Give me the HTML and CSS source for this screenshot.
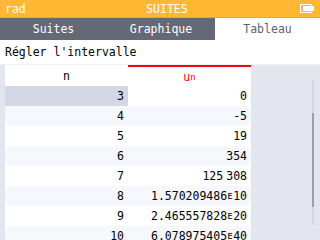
FILE: index.html
```html
<!DOCTYPE html>
<html>
<head>
  <meta charset="UTF-8">
  <title>Suites</title>
  <link rel="stylesheet" href="styles.css">
</head>
<body>
  <div class="screen">
    <div class="titlebar">
      <span class="angle">rad</span>
      <span class="title">SUITES</span>
      <svg class="battery" width="14" height="9" viewBox="0 0 14 9">
        <rect x="0.5" y="0.5" width="11" height="8" fill="none" stroke="#fff"/>
        <rect x="3" y="2" width="8" height="5" fill="#fff"/>
        <rect x="12" y="2" width="2" height="5" fill="#fff"/>
      </svg>
    </div>

    <div class="tabs">
      <div class="tab">Suites</div>
      <div class="tab">Graphique</div>
      <div class="tab active">Tableau</div>
    </div>

    <div class="range">Régler l'intervalle</div>

    <div class="table-wrap">
      <div class="table">
        <div class="cell head">n</div>
        <div class="cell head seq">u<sub>n</sub></div>

        <div class="cell num selected">3</div>
        <div class="cell">0</div>

        <div class="cell num alt">4</div>
        <div class="cell alt">-5</div>

        <div class="cell num">5</div>
        <div class="cell">19</div>

        <div class="cell num alt">6</div>
        <div class="cell alt">354</div>

        <div class="cell num">7</div>
        <div class="cell">125<span class="thin"></span>308</div>

        <div class="cell num alt">8</div>
        <div class="cell alt">1.570209486<span class="e">ᴇ</span>10</div>

        <div class="cell num">9</div>
        <div class="cell">2.465557828<span class="e">ᴇ</span>20</div>

        <div class="cell num alt">10</div>
        <div class="cell alt">6.078975405<span class="e">ᴇ</span>40</div>
      </div>

      <div class="side">
        <div class="track"><div class="thumb"></div></div>
      </div>
    </div>
  </div>
</body>
</html>
```

FILE: styles.css
```css
html, body {
  margin: 0;
  padding: 0;
}

body {
  width: 320px;
  height: 240px;
  overflow: hidden;
  background: #fff;
  font-family: "DejaVu Sans Mono", "Liberation Mono", monospace;
  font-size: 11.5px;
  color: #000;
}

.screen {
  display: flex;
  flex-direction: column;
  height: 240px;
}

.titlebar {
  height: 17px;
  border-bottom: 1px solid #e9a62c;
  background: #ffb734;
  color: #fff;
  display: flex;
  align-items: center;
  justify-content: space-between;
  padding: 0 6px 0 5px;
}

.title {
  margin-left: 8px;
}

.battery {
  display: block;
}

.tabs {
  height: 22px;
  background: #656975;
  display: grid;
  grid-template-columns: 107px 108px 105px;
}

.tab {
  color: #fff;
  display: flex;
  align-items: center;
  justify-content: center;
}

.tab.active {
  background: #fff;
  color: #5d6270;
}

.range {
  height: 24px;
  border-bottom: 1px solid #eef0f4;
  padding-left: 5px;
  display: flex;
  align-items: center;
}

.table-wrap {
  flex: 1;
  display: flex;
  background: #e4e6ef;
  padding-left: 5px;
  overflow: hidden;
}

.table {
  display: grid;
  grid-template-columns: 123px 123px;
  grid-template-rows: 21px;
  grid-auto-rows: 20px;
  background: #fff;
  align-self: flex-start;
}

.cell {
  display: flex;
  align-items: center;
  justify-content: flex-end;
  padding-right: 4px;
  background: #fff;
}

.cell.head {
  justify-content: center;
  padding-right: 0;
}

.cell.seq {
  color: #ff000c;
  border-top: 2px solid #ff000c;
  box-sizing: border-box;
}

.cell.seq sub {
  font-size: 9px;
  vertical-align: -3px;
  line-height: 0;
}

.cell.alt {
  background: #f6f8fd;
}

.cell.selected {
  background: #d4d7e6;
}

.thin {
  display: inline-block;
  width: 3px;
}

.e {
  font-size: 10px;
}

.side {
  flex: 1;
  padding: 15px 0 0 61px;
}

.track {
  width: 2px;
  height: 145px;
  background: #d6d8df;
  padding-top: 33px;
  box-sizing: border-box;
}

.thumb {
  height: 94px;
  background: #9c9ea6;
}
```
